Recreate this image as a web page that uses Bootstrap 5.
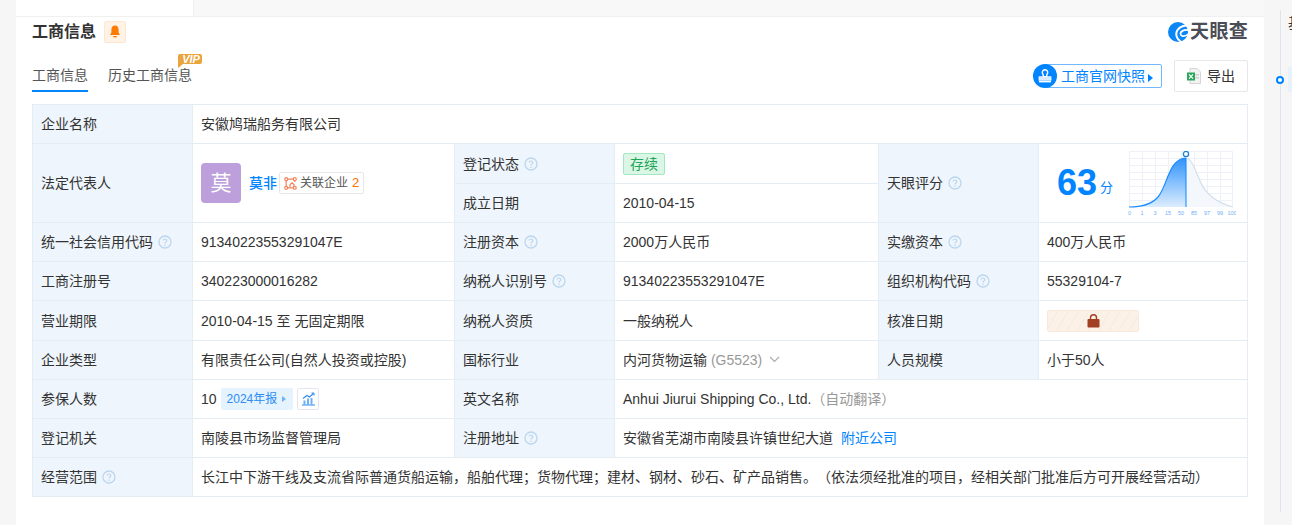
<!DOCTYPE html>
<html lang="zh-CN">
<head>
<meta charset="utf-8">
<title>工商信息</title>
<link href="https://cdn.jsdelivr.net/npm/bootstrap@5.3.0/dist/css/bootstrap.min.css" rel="stylesheet">
<style>
html,body{height:525px;overflow:hidden}
body{background:#f6f6f6;font-family:"Liberation Sans","Noto Sans CJK SC",sans-serif;font-size:14px;color:#333;padding-left:16px}
.pane{width:1248px;height:525px;background:#fff}
.topstrip{height:17px;border-bottom:1px solid #f0f0f0}
.topstrip-tab{width:178px;background:#fff;border-right:1px solid #f0f0f0}
.topstrip-rest{background:#f8f8f8}
.inner{padding:0 16px}
.head-row{height:28px;padding-top:1px}
.sec-title{font-size:16px;font-weight:700;color:#333;line-height:28px}
.bell-box{width:22px;height:22px;background:#fff3e8;border:1px solid #ffe6d0;border-radius:2px;margin-left:8px}
.logo-wrap{gap:2px}
.logo-text{font-size:19px;font-weight:700;color:#4a4d55;line-height:20px;letter-spacing:.3px}
.tabs-row{height:59px}
.tab-item{font-size:14px;color:#555;height:47px;padding-top:21px;line-height:18px;position:relative;margin-right:20px}
.tab-item.on{border-bottom:2px solid #0084ff}
.vip-mark{position:absolute;left:70px;top:9px}
.tools{padding-top:15px}
.snap{height:24px;position:relative;padding-left:12px;margin:4px 12px 0 0}
.snap-circle{position:absolute;left:0;top:0;width:24px;height:24px;border-radius:50%;background:#0084ff}
.snap-box{height:24px;border:1px solid #70b8ff;border-radius:2px;padding:0 8px 0 15px;color:#0084ff;line-height:22px;background:#fff}
.caret-r{display:inline-block;border-left:5px solid #0084ff;border-top:4px solid transparent;border-bottom:4px solid transparent;margin-left:3px;vertical-align:-1px}
.export-btn{width:74px;height:32px;border:1px solid #e6e8ec;border-radius:2px;color:#333;gap:6px}
.info-tbl{table-layout:fixed;width:1215px;margin:0;--bs-table-border-color:#e4ecf4;color:#333;border-collapse:collapse;text-spacing-trim:space-all}
.info-tbl td{padding:0 8px;height:39px;vertical-align:middle;line-height:20px;color:#333;border:1px solid #e4ecf4;white-space:nowrap}
.info-tbl tr.tall-row td{height:40px}
.info-tbl td.lb{background:#eef5fc}
.col-lb{width:160px}.col-a{width:262px}.col-b{width:264px}.col-c{width:209px}
.hint{width:14px;height:14px;margin-left:5px;vertical-align:-2px}
.avatar-box{width:40px;height:40px;border-radius:4px;background:#bc9fdb;color:#fff;font-size:21px;margin-right:8px;flex:none}
.blue-link{color:#0084ff;text-decoration:none}
.name-link{font-weight:500;color:#0084ff}
.rel-tag{height:22px;border:1px solid #e6e8ec;border-radius:2px;padding:0 4px;font-size:12px;color:#555;margin-left:2px;gap:3px;line-height:20px}
.rel-num{color:#ff6a00;font-size:13px;margin-left:1px}
.state-tag{display:inline-block;height:22px;line-height:20px;padding:0 6px;background:#d9f7e4;border:1px solid #a3e8c0;border-radius:2px;color:#1fa45c}
.score-area{padding-right:5px}
.score-num{font-size:36px;font-weight:700;color:#0084ff;line-height:40px}
.score-unit{font-size:13px;color:#0084ff;margin-left:3px;position:relative;top:5px}
.score-chart{margin:2px 3px 0 0;flex:none}
.lock-box{width:92px;height:22px;border:1px solid #f8e9dc;border-radius:2px;background:repeating-linear-gradient(120deg,#fbf1e7 0 8px,#f6ebe1 8px 9px)}
.muted-txt{color:#999}
.chev{margin-left:3px;vertical-align:2px}
.report-tag{height:22px;background:#e5f3ff;color:#2b8cf2;font-size:12px;padding:0 7px 0 6px;border-radius:2px;margin-left:4px;line-height:22px}
.report-tag .caret-r{border-left-color:#6fb1f5;border-left-width:4px;border-top-width:3px;border-bottom-width:3px;margin-left:5px;vertical-align:1px}
.chart-btn{width:22px;height:22px;border:1px solid #e3e6ee;border-radius:2px;margin-left:4px}
.rail{width:28px;height:525px;position:relative}
.rail-inner{height:502px;margin:10px 0 0 16px;border-left:1px solid #e3e3f0;position:relative;padding-left:7px;overflow:hidden}
.rail-txt{font-size:14px;line-height:20px;padding-top:3px;color:#333;white-space:nowrap}
.rail-hi{position:absolute;left:7px;top:57px;width:20px;height:25px;background:#e8f2fc}
.rail-dot{position:absolute;left:12px;top:76px;width:8px;height:8px;border-radius:50%;border:2px solid #0084ff;background:#fff}
</style>
</head>
<body class="d-flex">
<svg width="0" height="0" class="position-absolute">
  <symbol id="qm" viewBox="0 0 14 14">
    <circle cx="7" cy="7" r="6" fill="none" stroke="#bcd6ee" stroke-width="1.3"/>
    <path d="M5.2 5.6C5.2 4.6 6 4 7 4s1.8.6 1.8 1.6c0 1.4-1.8 1.4-1.8 2.8" fill="none" stroke="#bcd6ee" stroke-width="1.2"/>
    <circle cx="7" cy="10.2" r=".8" fill="#bcd6ee"/>
  </symbol>
</svg>
<div class="pane">
  <div class="topstrip d-flex">
    <div class="topstrip-tab"></div>
    <div class="topstrip-rest flex-grow-1"></div>
  </div>
  <div class="inner">
    <div class="head-row d-flex align-items-center justify-content-between">
      <div class="d-flex align-items-center">
        <span class="sec-title">工商信息</span>
        <span class="bell-box d-flex align-items-center justify-content-center">
          <svg width="12" height="13" viewBox="0 0 12 13"><path d="M6 0.5C3.6.5 2.4 2.4 2.4 4.6V7.6L1 10h10L9.6 7.6V4.6C9.6 2.4 8.4.5 6 .5Z" fill="#ff7a00"/><path d="M4 11h4a2 1.6 0 0 1-4 0Z" fill="#ff7a00"/></svg>
        </span>
      </div>
      <div class="logo-wrap d-flex align-items-center">
        <svg width="20" height="20" viewBox="0 0 20 20">
          <circle cx="10" cy="10" r="10" fill="#0b86f5"/>
          <path d="M20 3.500C14 3 9 6.500 8.300 11.500 8 15 10 18 14 20.500" fill="none" stroke="#fff" stroke-width="2"/>
          <path d="M20 8C15.500 7.600 12.300 9.500 12.500 12 12.800 14.500 16 15 20 12.500" fill="none" stroke="#fff" stroke-width="1.800"/>
        </svg>
        <span class="logo-text">天眼查</span>
      </div>
    </div>
    <div class="tabs-row d-flex justify-content-between align-items-start">
      <div class="d-flex">
        <div class="tab-item on">工商信息</div>
        <div class="tab-item">历史工商信息
          <svg class="vip-mark" width="24" height="14" viewBox="0 0 24 14"><path d="M2 0H22a2 2 0 0 1 2 2V8a2 2 0 0 1-2 2H5L0 14V2A2 2 0 0 1 2 0Z" fill="#eba33c"/><text x="13" y="8.800" text-anchor="middle" font-family="Liberation Sans" font-size="11" font-weight="700" font-style="italic" fill="#fff">VIP</text></svg>
        </div>
      </div>
      <div class="tools d-flex align-items-start">
        <div class="snap">
          <span class="snap-circle d-flex align-items-center justify-content-center">
            <svg width="16" height="16" viewBox="0 0 16 16"><path d="M8 1.700a2.700 2.700 0 0 1 2.700 2.700c0 1.300-.9 1.900-1 3V8.800H6.300V7.400c-.1-1.100-1-1.700-1-3A2.700 2.700 0 0 1 8 1.700Z" fill="none" stroke="#fff" stroke-width="1.400"/><rect x="2" y="8.800" width="12" height="3.400" fill="#d4e9ff" stroke="#fff" stroke-width=".8"/><rect x="2" y="13" width="12" height="1.400" fill="#fff"/></svg>
          </span>
          <div class="snap-box">工商官网快照<i class="caret-r"></i></div>
        </div>
        <div class="export-btn d-flex align-items-center justify-content-center">
          <svg width="14" height="16" viewBox="0 0 14 16"><path d="M3 .5H10L13.500 4V15.500H3Z" fill="#f2f2f2" stroke="#d5d5d5"/><rect x="8" y="6" width="4" height="1.500" fill="#cfcfcf"/><rect x="8" y="9" width="4" height="1.500" fill="#cfcfcf"/><rect x="0" y="4.500" width="8" height="8" fill="#2aa55c"/><path d="M2 6.300L6 10.700M6 6.300L2 10.700" stroke="#fff" stroke-width="1.200"/></svg>
          <span>导出</span>
        </div>
      </div>
    </div>
    <table class="table table-bordered info-tbl">
      <colgroup>
        <col class="col-lb"><col class="col-a"><col class="col-lb"><col class="col-b"><col class="col-lb"><col class="col-c">
      </colgroup>
      <tbody>
      <tr><td class="lb">企业名称</td><td colspan="5">安徽鸠瑞船务有限公司</td></tr>
      <tr class="tall-row">
        <td class="lb" rowspan="2">法定代表人</td>
        <td rowspan="2">
          <div class="d-flex align-items-center">
            <span class="avatar-box d-flex align-items-center justify-content-center">莫</span>
            <a class="name-link text-decoration-none" href="#">莫非</a>
            <span class="rel-tag d-inline-flex align-items-center">
              <svg width="13" height="13" viewBox="0 0 13 13" fill="none" stroke="#f4825a" stroke-width="1.200"><circle cx="2.200" cy="2.200" r="1.500"/><circle cx="10.800" cy="2.200" r="1.500"/><circle cx="2.200" cy="10.800" r="1.500"/><circle cx="10.800" cy="10.800" r="1.500"/><path d="M3.800 2.200H9.200M2.200 3.800V9.200M3.800 10.800H9.200M10.800 3.800V5"/><path d="M6 10V7.500L8 5.800 10 7.500V10" stroke="#f4825a"/></svg>
              关联企业<span class="rel-num">2</span>
            </span>
          </div>
        </td>
        <td class="lb">登记状态<svg class="hint"><use href="#qm"/></svg></td>
        <td><span class="state-tag">存续</span></td>
        <td class="lb" rowspan="2">天眼评分<svg class="hint"><use href="#qm"/></svg></td>
        <td rowspan="2">
          <div class="d-flex align-items-center">
            <div class="score-area flex-grow-1 d-flex align-items-center justify-content-center">
              <span class="score-num">63</span><span class="score-unit">分</span>
            </div>
            <svg class="score-chart" width="108" height="66" viewBox="0 0 108 66">
              <defs><linearGradient id="gf" x1="0" y1="0" x2="0" y2="1"><stop offset="0" stop-color="#2f93fb"/><stop offset="1" stop-color="#dcedfe"/></linearGradient></defs>
              <g stroke="#eef2f8" stroke-width="1" fill="none">
                <path d="M1 .5H105M1 7.500H105M1 14.500H105M1 21.500H105M1 28.500H105M1 35.500H105M1 42.500H105M1 49.500H105"/>
                <path d="M1.500 .5V56M14.500 .5V56M27.500 .5V56M40.500 .5V56M53.500 .5V56M66.500 .5V56M79.500 .5V56M92.500 .5V56M104.500 .5V56"/>
              </g>
              <path d="M58 7C63 7 67 18 72 30 77 42 86 51 105 56H58Z" fill="#f4f7fb"/>
              <path d="M1 56C14 56 24 53 30 46 39 36 41 7 58 7V56Z" fill="url(#gf)"/>
              <path d="M58 7C63 7 67 18 72 30 77 42 86 51 105 56" fill="none" stroke="#d3dfea" stroke-width="1.200"/>
              <path d="M1 56C14 56 24 53 30 46 39 36 41 7 58 7" fill="none" stroke="#1a8cff" stroke-width="1.200"/>
              <path d="M58 7V56" stroke="#0f86ff" stroke-width="1"/>
              <circle cx="58" cy="3" r="2.600" fill="#fff" stroke="#1a7fd8" stroke-width="1.300"/>
              <g font-family="Liberation Sans" font-size="5.500" fill="#6fb1f5" text-anchor="middle">
                <text x="1.500" y="64">0</text><text x="14" y="64">1</text><text x="27" y="64">3</text><text x="40" y="64">15</text><text x="53" y="64">50</text><text x="66" y="64">85</text><text x="79" y="64">97</text><text x="92" y="64">99</text><text x="104" y="64">100</text>
              </g>
            </svg>
          </div>
        </td>
      </tr>
      <tr><td class="lb">成立日期</td><td>2010-04-15</td></tr>
      <tr>
        <td class="lb">统一社会信用代码<svg class="hint"><use href="#qm"/></svg></td><td>91340223553291047E</td>
        <td class="lb">注册资本<svg class="hint"><use href="#qm"/></svg></td><td>2000万人民币</td>
        <td class="lb">实缴资本<svg class="hint"><use href="#qm"/></svg></td><td>400万人民币</td>
      </tr>
      <tr>
        <td class="lb">工商注册号</td><td>340223000016282</td>
        <td class="lb">纳税人识别号<svg class="hint"><use href="#qm"/></svg></td><td>91340223553291047E</td>
        <td class="lb">组织机构代码<svg class="hint"><use href="#qm"/></svg></td><td>55329104-7</td>
      </tr>
      <tr class="tall-row">
        <td class="lb">营业期限</td><td>2010-04-15 至 无固定期限</td>
        <td class="lb">纳税人资质</td><td>一般纳税人</td>
        <td class="lb">核准日期</td>
        <td><div class="lock-box d-flex align-items-center justify-content-center">
          <svg width="13" height="14" viewBox="0 0 13 14"><path d="M3.500 6V3.800a3 3 0 0 1 6 0V6" fill="none" stroke="#a33f22" stroke-width="1.400"/><rect x=".5" y="5" width="12" height="8.500" rx="1" fill="#a33f22"/></svg>
        </div></td>
      </tr>
      <tr>
        <td class="lb">企业类型</td><td>有限责任公司(自然人投资或控股)</td>
        <td class="lb">国标行业</td>
        <td>内河货物运输<span class="muted-txt"> (G5523)</span>
          <svg class="chev" width="11" height="7" viewBox="0 0 11 7"><path d="M1 1L5.500 5.500 10 1" fill="none" stroke="#aaa" stroke-width="1.100"/></svg>
        </td>
        <td class="lb">人员规模</td><td>小于50人</td>
      </tr>
      <tr>
        <td class="lb">参保人数</td>
        <td><div class="d-flex align-items-center">10
          <span class="report-tag">2024年报<i class="caret-r"></i></span>
          <span class="chart-btn d-flex align-items-center justify-content-center">
            <svg width="13" height="14" viewBox="0 0 13 14"><path d="M1 6.500L5 3.500 7.500 5 11.500 1.500" fill="none" stroke="#2b8cf2" stroke-width="1.100"/><path d="M9.500 1H12V3.500" fill="none" stroke="#2b8cf2"/><path d="M1.500 8.500H3.500V12.500H1.500ZM5 6.500H7V12.500H5ZM8.500 6H10.500V12.500H8.500Z" fill="#6fb1f5"/><path d="M0 13H13" stroke="#2b8cf2"/></svg>
          </span>
        </div></td>
        <td class="lb">英文名称</td>
        <td colspan="3">Anhui Jiurui Shipping Co., Ltd.<span class="muted-txt">（自动翻译）</span></td>
      </tr>
      <tr>
        <td class="lb">登记机关</td><td>南陵县市场监督管理局</td>
        <td class="lb">注册地址<svg class="hint"><use href="#qm"/></svg></td>
        <td colspan="3">安徽省芜湖市南陵县许镇世纪大道<a class="blue-link ms-2" href="#">附近公司</a></td>
      </tr>
      <tr>
        <td class="lb">经营范围<svg class="hint"><use href="#qm"/></svg></td>
        <td colspan="5">长江中下游干线及支流省际普通货船运输，船舶代理；货物代理；建材、钢材、砂石、矿产品销售。（依法须经批准的项目，经相关部门批准后方可开展经营活动）</td>
      </tr>
      </tbody>
    </table>
  </div>
</div>
<div class="rail">
  <div class="rail-inner">
    <div class="rail-txt">基</div>
    <div class="rail-hi"></div>
  </div>
  <span class="rail-dot"></span>
</div>
<script src="https://cdn.jsdelivr.net/npm/bootstrap@5.3.0/dist/js/bootstrap.bundle.min.js"></script>
</body>
</html>
